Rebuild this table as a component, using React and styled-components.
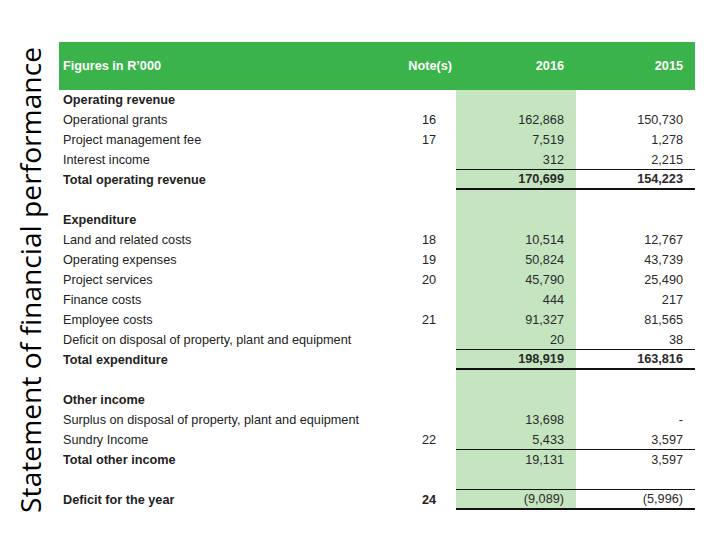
import React from "react";
import styled, { createGlobalStyle } from "styled-components";

const Global = createGlobalStyle`
  html, body { margin: 0; padding: 0; background: #fff; }
  body { font-family: "Liberation Sans", Arial, sans-serif; }
`;

const Page = styled.div`
  width: 720px;
  height: 540px;
  display: flex;
  flex-direction: row;
  box-sizing: border-box;
`;

const TitleCol = styled.div`
  width: 59px;
  display: flex;
  align-items: flex-end;
  justify-content: center;
  padding-bottom: 27px;
  box-sizing: border-box;
`;

const Title = styled.h1`
  margin: 0;
  writing-mode: vertical-rl;
  transform: rotate(180deg);
  font-family: "Open Sans", "Noto Sans", sans-serif;
  font-weight: 400;
  font-size: 28.2px;
  line-height: 30px;
  color: #000;
  white-space: nowrap;
`;

const Table = styled.div`
  margin-top: 42px;
  width: 636px;
  display: flex;
  flex-direction: column;
  font-size: 12.7px;
  color: #222;
`;

const Header = styled.div`
  display: grid;
  grid-template-columns: 346px 51px 120px 119px;
  height: 48px;
  align-items: center;
  background: #3ab34a;
  color: #fff;
  font-weight: 700;
`;

const HeadCell = styled.div`
  text-align: ${(p) => (p.$left ? "left" : "right")};
  padding: ${(p) => (p.$left ? "0 0 0 4px" : p.$note ? "0 4px 0 0" : "0 12px 0 0")};
`;

const Row = styled.div`
  display: grid;
  grid-template-columns: 346px 51px 120px 119px;
  height: 20px;
  line-height: 20px;
`;

const Label = styled.div`
  padding-left: 4px;
  padding-top: 1px;
  line-height: 19px;
  white-space: nowrap;
  font-weight: ${(p) => (p.$bold ? 700 : 400)};
`;

const Note = styled.div`
  text-align: right;
  padding-right: 20px;
  padding-top: 1px;
  line-height: 19px;
  font-weight: ${(p) => (p.$bold ? 700 : 400)};
`;

const Num = styled.div`
  text-align: right;
  padding-right: 12px;
  padding-top: 1px;
  box-sizing: border-box;
  color: #2a2a2a;
  font-weight: ${(p) => (p.$bold ? 700 : 400)};
  background: ${(p) => (p.$current ? "#c5e4c0" : "transparent")};
  border-bottom: ${(p) =>
    p.$line === "thick" ? "2px solid #111" : p.$line === "thin" ? "1px solid #111" : "none"};
  line-height: ${(p) => (p.$line === "thick" ? "17px" : p.$line === "thin" ? "18px" : "19px")};
`;

const rows = [
  { label: "Operating revenue", bold: true },
  { label: "Operational grants", note: "16", a: "162,868", b: "150,730" },
  { label: "Project management fee", note: "17", a: "7,519", b: "1,278" },
  { label: "Interest income", a: "312", b: "2,215", line: "thin" },
  { label: "Total operating revenue", bold: true, boldNums: true, a: "170,699", b: "154,223", line: "thick" },
  { label: "" },
  { label: "Expenditure", bold: true },
  { label: "Land and related costs", note: "18", a: "10,514", b: "12,767" },
  { label: "Operating expenses", note: "19", a: "50,824", b: "43,739" },
  { label: "Project services", note: "20", a: "45,790", b: "25,490" },
  { label: "Finance costs", a: "444", b: "217" },
  { label: "Employee costs", note: "21", a: "91,327", b: "81,565" },
  { label: "Deficit on disposal of property, plant and equipment", a: "20", b: "38", line: "thin" },
  { label: "Total expenditure", bold: true, boldNums: true, a: "198,919", b: "163,816", line: "thick" },
  { label: "" },
  { label: "Other income", bold: true },
  { label: "Surplus on disposal of property, plant and equipment", a: "13,698", b: "-" },
  { label: "Sundry Income", note: "22", a: "5,433", b: "3,597", line: "thin" },
  { label: "Total other income", bold: true, a: "19,131", b: "3,597" },
  { label: "", line: "thin" },
  { label: "Deficit for the year", bold: true, boldNote: true, note: "24", a: "(9,089)", b: "(5,996)", line: "thick" },
];

export default function App() {
  return (
    <Page>
      <Global />
      <TitleCol>
        <Title>Statement of financial performance</Title>
      </TitleCol>
      <Table>
        <Header>
          <HeadCell $left>Figures in R’000</HeadCell>
          <HeadCell $note>Note(s)</HeadCell>
          <HeadCell>2016</HeadCell>
          <HeadCell>2015</HeadCell>
        </Header>
        {rows.map((r, i) => (
          <Row key={i}>
            <Label $bold={r.bold}>{r.label}</Label>
            <Note $bold={r.boldNote}>{r.note}</Note>
            <Num $current $bold={r.boldNums} $line={r.line}>{r.a}</Num>
            <Num $bold={r.boldNums} $line={r.line}>{r.b}</Num>
          </Row>
        ))}
      </Table>
    </Page>
  );
}
